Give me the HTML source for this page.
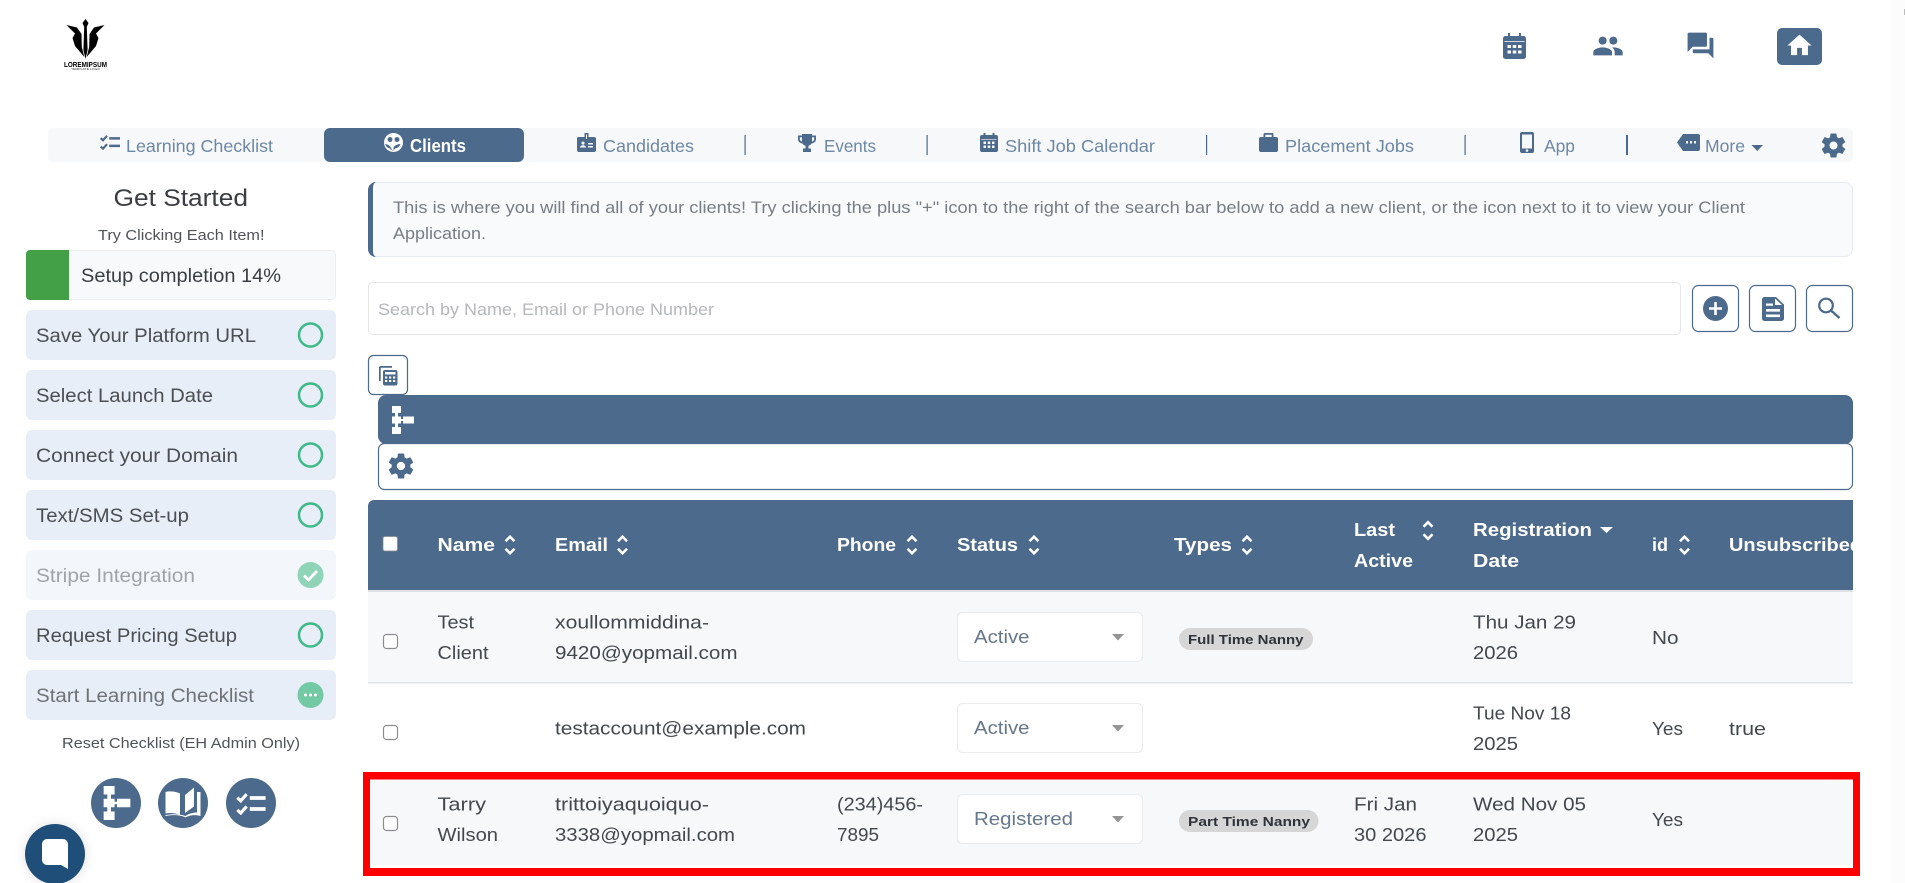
<!DOCTYPE html>
<html lang="en"><head><meta charset="utf-8"><title>Clients</title>
<style>
html,body{margin:0;padding:0;background:#fff;width:1905px;height:883px;overflow:hidden}
svg{display:block}
text{font-family:"Liberation Sans",sans-serif;font-size:18px;fill:#43484d}
.tab{font-size:17.5px;fill:#6d87a5}
.th{font-weight:700;fill:#fff;font-size:18px}
.side{font-size:19px;fill:#4b4f53}
.sel{fill:#66778b;font-size:18px}
.bd{font-weight:700;font-size:13px;fill:#2f3338}
.i{fill:#4c6a8c}
</style></head>
<body>
<svg xmlns="http://www.w3.org/2000/svg" width="1905" height="883" viewBox="0 0 1905 883">
<defs>
<symbol id="gear" viewBox="2.6 2 18.8 20"><path fill-rule="evenodd" d="M19.14 12.94c.04-.3.06-.61.06-.94 0-.32-.02-.64-.07-.94l2.03-1.58c.18-.14.23-.41.12-.61l-1.92-3.32c-.12-.22-.37-.29-.59-.22l-2.39.96c-.5-.38-1.03-.7-1.62-.94l-.36-2.54c-.04-.24-.24-.41-.48-.41h-3.84c-.24 0-.43.17-.47.41l-.36 2.54c-.59.24-1.13.57-1.62.94l-2.39-.96c-.22-.08-.47 0-.59.22L2.74 8.87c-.12.21-.08.47.12.61l2.03 1.58c-.05.3-.09.63-.09.94s.02.64.07.94l-2.03 1.58c-.18.14-.23.41-.12.61l1.92 3.32c.12.22.37.29.59.22l2.39-.96c.5.38 1.03.7 1.62.94l.36 2.54c.05.24.24.41.48.41h3.84c.24 0 .44-.17.47-.41l.36-2.54c.59-.24 1.13-.56 1.62-.94l2.39.96c.22.08.47 0 .59-.22l1.92-3.32c.12-.22.07-.47-.12-.61l-2.01-1.58zM12 15.2a3.2 3.2 0 1 1 0-6.4 3.2 3.2 0 0 1 0 6.4z"/></symbol>
<symbol id="sort" viewBox="0 0 12 22"><path fill="none" stroke="#fff" stroke-width="2.5" d="M1.5 7.2 6 2.7l4.5 4.5M1.5 14.8 6 19.3l4.5-4.5"/></symbol>
<symbol id="cal" viewBox="0 0 23 26"><path fill-rule="evenodd" d="M5 0h2v3h9V0h2v3h2.500A2.500 2.500 0 0 1 23 5.500v18a2.500 2.500 0 0 1-2.500 2.500h-18A2.500 2.500 0 0 1 0 23.500v-18A2.500 2.500 0 0 1 2.500 3H5zM1.500 8v.8h20V8zM4.500 12h3.500v3H4.500zM9.750 12h3.500v3h-3.500zM15 12h3.500v3H15zM4.500 17.500h3.500v3H4.500zM9.750 17.500h3.500v3h-3.500zM15 17.500h3.500v3H15z"/></symbol>
<symbol id="cal2" viewBox="0 0 18 19"><path fill-rule="evenodd" d="M3.500 0h2v2h7V0h2v2H16a2 2 0 0 1 2 2v13a2 2 0 0 1-2 2H2a2 2 0 0 1-2-2V4a2 2 0 0 1 2-2h1.500zM1.200 6v.6h15.600V6zM3.500 8.500H6V11H3.500zM7.750 8.500h2.500V11h-2.500zM12 8.500h2.500V11H12zM3.500 12.500H6V15H3.500zM7.750 12.500h2.500V15h-2.500zM12 12.500h2.500V15H12z"/></symbol>
<symbol id="sitemap" viewBox="0 0 22 28"><path d="M0 0h9v7H0zM0 10.500h9v7H0zM0 21h9v7H0zM11 10.500h11v7H11zM3 7h3v3.500H3zM3 17.500h3V21H3zM9 13h2v2H9z"/></symbol>
<symbol id="checks" viewBox="0 0 24 18"><path fill="none" stroke="currentColor" stroke-width="2.600" d="M.8 3.800 3.600 6.400 8.400 1M.8 13.800l2.800 2.600 4.800-5.400"/><path fill="currentColor" d="M11 2.600h13v3H11zM11 11.600h13v3H11z"/></symbol>
<clipPath id="tc"><path d="M368 500h1485v90H368z"/></clipPath>
</defs>

<rect x="1890" y="0" width="15" height="883" fill="#fcfcfc"/>
<rect x="1904" y="9" width="1" height="6" fill="#bbb"/>

<!-- logo -->
<g fill="#000">
<path d="M85.500 19 88.500 23 86.800 27 87.600 50 85.500 59 83.400 50 84.200 27 82.500 23z"/>
<path d="M66.500 25 77 27.500 81.500 34 81.800 47 84.300 57 75 46 72.500 38 75 33.500z"/>
<path d="M104.500 25 94 27.500 89.500 34 89.200 47 86.700 57 96 46 98.500 38 96 33.500z"/>
</g>
<text x="64" y="67" textLength="43" lengthAdjust="spacingAndGlyphs" style="font-size:7.5px;font-weight:700;fill:#000">LOREMIPSUM</text>
<text x="71" y="70" textLength="29" lengthAdjust="spacingAndGlyphs" style="font-size:2.500px;fill:#333">TEMPLATE LOGO</text>

<!-- header icons -->
<use href="#cal" x="1503" y="33" width="23" height="26" class="i"/>
<svg x="1592" y="30" width="32" height="32" viewBox="0 0 24 24" class="i"><path d="M16 11c1.660 0 2.990-1.340 2.990-3S17.660 5 16 5c-1.660 0-3 1.340-3 3s1.340 3 3 3zm-8 0c1.660 0 2.990-1.340 2.990-3S9.660 5 8 5C6.340 5 5 6.340 5 8s1.340 3 3 3zm0 2c-2.330 0-7 1.170-7 3.500V19h14v-2.500c0-2.330-4.670-3.500-7-3.500zm8 0c-.29 0-.62.02-.97.05 1.160.84 1.970 1.970 1.970 3.450V19h6v-2.500c0-2.330-4.670-3.500-7-3.500z"/></svg>
<svg x="1685" y="30" width="31" height="31" viewBox="0 0 24 24" class="i"><path d="M21 6h-2v9H6v2c0 .55.45 1 1 1h11l4 4V7c0-.55-.45-1-1-1zm-4 6V3c0-.55-.45-1-1-1H3c-.55 0-1 .45-1 1v14l4-4h10c.55 0 1-.45 1-1z"/></svg>
<rect x="1777" y="28" width="45" height="37" rx="5" fill="#4c6a8c"/>
<svg x="1785" y="31" width="29" height="29" viewBox="0 0 24 24" fill="#fff"><path d="M10 20v-6h4v6h5v-8h3L12 3 2 12h3v8z"/></svg>

<!-- tabs -->
<rect x="48" y="128" width="1805" height="34" rx="5" fill="#f6f8fa"/>
<rect x="324" y="128" width="200" height="34" rx="6" fill="#4c6a8c"/>
<svg x="100" y="135" width="20" height="15" viewBox="0 0 24 18" color="#4c6a8c"><use href="#checks" width="24" height="18"/></svg>
<text class="tab" x="126" y="152" textLength="147" lengthAdjust="spacingAndGlyphs">Learning Checklist</text>
<circle cx="393.500" cy="142.500" r="9.500" fill="#fff"/>
<circle cx="390" cy="139.500" r="2.500" fill="#4c6a8c"/><circle cx="397" cy="139.500" r="2.500" fill="#4c6a8c"/><path d="M385 144c3 .5 6 1.500 7 6.500h1.500v-3c1-2 4-3.500 7-3.500-1 3-3 4-5.500 4.500l-1 1.500h-3l-1-1.500c-2.500-.5-4-2-5-4.500z" fill="#4c6a8c"/>
<text x="410" y="152" textLength="56" lengthAdjust="spacingAndGlyphs" style="font-weight:700;fill:#fff;font-size:18px">Clients</text>
<svg x="577" y="133" width="19" height="19" viewBox="0 0 19 19"><path class="i" fill-rule="evenodd" d="M7.500 0h4v4H17a2 2 0 0 1 2 2v11a2 2 0 0 1-2 2H2a2 2 0 0 1-2-2V6a2 2 0 0 1 2-2h5.500zM9 1.500V6h1V1.500zM6 8.500a1.600 1.600 0 1 0 .01 0zM3 14.500h6c0-3-6-3-6 0zM11 10h5v1.500h-5zM11 13h5v1.500h-5z"/></svg>
<text class="tab" x="603" y="152" textLength="91" lengthAdjust="spacingAndGlyphs">Candidates</text>
<rect x="744.500" y="135" width="1.200" height="20" fill="#4c6a8c"/>
<svg x="798" y="134" width="18" height="18" viewBox="0 0 18 18"><path class="i" fill-rule="evenodd" d="M4 0h10v1.500h4V5c0 2.500-2 4.200-4.500 4.500C12.800 10.800 11.500 11.500 10.500 11.800V14.500H13V18H5V14.500h2.500V11.800C6.500 11.500 5.200 10.800 4.500 9.500 2 9.200 0 7.500 0 5V1.500h4zM1.800 3.200V5c0 1.200.9 2.200 2.200 2.600V3.200zM16.200 3.200H14v4.400c1.300-.4 2.200-1.400 2.200-2.600z"/></svg>
<text class="tab" x="824" y="152" textLength="52" lengthAdjust="spacingAndGlyphs">Events</text>
<rect x="926.500" y="135" width="1.200" height="20" fill="#4c6a8c"/>
<use href="#cal2" x="980" y="133" width="18" height="19" class="i"/>
<text class="tab" x="1005" y="152" textLength="150" lengthAdjust="spacingAndGlyphs">Shift Job Calendar</text>
<rect x="1206" y="135" width="1.200" height="20" fill="#4c6a8c"/>
<svg x="1259" y="133" width="19" height="19" viewBox="0 0 19 19"><path class="i" fill-rule="evenodd" d="M6 0h7a1.500 1.500 0 0 1 1.500 1.500V4H17a2 2 0 0 1 2 2v11a2 2 0 0 1-2 2H2a2 2 0 0 1-2-2V6a2 2 0 0 1 2-2h2.500V1.500A1.500 1.500 0 0 1 6 0zM6.300 1.800V4h6.400V1.800z"/></svg>
<text class="tab" x="1285" y="152" textLength="129" lengthAdjust="spacingAndGlyphs">Placement Jobs</text>
<rect x="1464.500" y="135" width="1.200" height="20" fill="#4c6a8c"/>
<svg x="1520" y="132" width="14" height="21" viewBox="0 0 14 21"><path class="i" fill-rule="evenodd" d="M2 0h10a2 2 0 0 1 2 2v17a2 2 0 0 1-2 2H2a2 2 0 0 1-2-2V2a2 2 0 0 1 2-2zM2 2.500v14h10v-14zM7 17.300a1.300 1.300 0 1 0 .01 0z"/></svg>
<text class="tab" x="1544" y="152" textLength="31" lengthAdjust="spacingAndGlyphs">App</text>
<rect x="1626" y="135" width="2" height="20" fill="#4c6a8c"/>
<svg x="1677" y="134" width="23" height="17" viewBox="0 0 23 17"><path class="i" fill-rule="evenodd" d="M6 0h15a2 2 0 0 1 2 2v13a2 2 0 0 1-2 2H6L0 8.500zM9 7v2.500h2V7zM13 7v2.500h2V7zM17 7v2.500h2V7z"/></svg>
<text class="tab" x="1705" y="152" textLength="40" lengthAdjust="spacingAndGlyphs">More</text>
<path class="i" d="M1751.500 145h11.500l-5.750 6z"/>
<use href="#gear" x="1821" y="133" width="25" height="25" class="i"/>

<!-- sidebar -->
<text x="113.500" y="206" textLength="134.500" lengthAdjust="spacingAndGlyphs" style="font-size:24px;fill:#3a3e42">Get Started</text>
<text x="98" y="240" textLength="166.500" lengthAdjust="spacingAndGlyphs" style="font-size:15px;fill:#505458">Try Clicking Each Item!</text>
<rect x="26.500" y="250.500" width="309" height="49" rx="4" fill="#f8f9fb" stroke="#eceef1"/>
<path d="M30 250h39v50H30a4 4 0 0 1-4-4v-42a4 4 0 0 1 4-4z" fill="#43a047"/>
<text x="81" y="282" textLength="200" lengthAdjust="spacingAndGlyphs" style="font-size:19px;fill:#3a3e42">Setup completion 14%</text>

<g fill="#e8eef8">
<rect x="26" y="310" width="310" height="50" rx="6"/>
<rect x="26" y="370" width="310" height="50" rx="6"/>
<rect x="26" y="430" width="310" height="50" rx="6"/>
<rect x="26" y="490" width="310" height="50" rx="6"/>
<rect x="26" y="550" width="310" height="50" rx="6" fill="#f3f6fb"/>
<rect x="26" y="610" width="310" height="50" rx="6"/>
<rect x="26" y="670" width="310" height="50" rx="6"/>
</g>
<text class="side" x="36" y="342" textLength="220" lengthAdjust="spacingAndGlyphs">Save Your Platform URL</text>
<text class="side" x="36" y="402" textLength="177" lengthAdjust="spacingAndGlyphs">Select Launch Date</text>
<text class="side" x="36" y="462" textLength="202" lengthAdjust="spacingAndGlyphs">Connect your Domain</text>
<text class="side" x="36" y="522" textLength="153" lengthAdjust="spacingAndGlyphs">Text/SMS Set-up</text>
<text class="side" x="36" y="582" textLength="159" lengthAdjust="spacingAndGlyphs" style="fill:#a0a3a7">Stripe Integration</text>
<text class="side" x="36" y="642" textLength="201" lengthAdjust="spacingAndGlyphs">Request Pricing Setup</text>
<text class="side" x="36" y="702" textLength="218" lengthAdjust="spacingAndGlyphs" style="fill:#6f7377">Start Learning Checklist</text>
<g fill="none" stroke="#3dba87" stroke-width="2.500">
<circle cx="310.500" cy="335" r="11.500"/><circle cx="310.500" cy="395" r="11.500"/><circle cx="310.500" cy="455" r="11.500"/><circle cx="310.500" cy="515" r="11.500"/><circle cx="310.500" cy="635" r="11.500"/>
</g>
<circle cx="310.500" cy="575" r="13" fill="#8fd4b6"/>
<path d="M304 575.500l4.500 4.500 8.500-9" fill="none" stroke="#fff" stroke-width="2.800"/>
<circle cx="310.500" cy="695" r="13" fill="#72c9a4"/>
<g fill="#fff"><circle cx="305.500" cy="695" r="1.500"/><circle cx="310.500" cy="695" r="1.500"/><circle cx="315.500" cy="695" r="1.500"/></g>
<text x="62" y="748" textLength="238" lengthAdjust="spacingAndGlyphs" style="font-size:15px;fill:#505458">Reset Checklist (EH Admin Only)</text>
<circle cx="116" cy="803" r="25" fill="#4c6a8c"/>
<circle cx="183" cy="803" r="25" fill="#4c6a8c"/>
<circle cx="251" cy="803" r="25" fill="#4c6a8c"/>
<use href="#sitemap" x="103" y="786" width="28" height="34" fill="#fff"/>
<path fill="#fff" d="M165.500 792c4-1.200 10-.8 14.500 1.500v21.500c-4-1.800-10-2.500-14.500-1.500zM185 795l9-7.500v19l-9 6.500zM197 792h3.500v24c-5.500-1.500-11-1-15 1.500-4.500-2.500-12-3-20-1.500v-1c7-1.300 15-1 20 1 3.500-2.500 7.500-3.500 11.500-3.500z"/>
<svg x="236" y="793" width="30" height="22" viewBox="0 0 24 18" color="#fff"><use href="#checks" width="24" height="18"/></svg>
<defs><filter id="sh" x="-30%" y="-30%" width="160%" height="160%"><feGaussianBlur stdDeviation="6"/></filter></defs>
<circle cx="55" cy="854" r="30" fill="#000" opacity=".12" filter="url(#sh)"/>
<circle cx="55" cy="854" r="30" fill="#1f4e79"/>
<path fill="#fff" d="M47 839h16a5 5 0 0 1 5 5v25l-7-4H47a5 5 0 0 1-5-5v-16a5 5 0 0 1 5-5z"/>

<!-- alert -->
<rect x="368.500" y="182.500" width="1484" height="74" rx="8" fill="#f9fafc" stroke="#e8ebef"/>
<path d="M376 182a8 8 0 0 0-8 8v59a8 8 0 0 0 8 8c-2-1-3-3-3-6v-63c0-3 1-5 3-6z" fill="#4c6a8c"/>
<text x="393" y="213" textLength="1352" lengthAdjust="spacingAndGlyphs" style="font-size:16.500px;fill:#777d84">This is where you will find all of your clients! Try clicking the plus "+" icon to the right of the search bar below to add a new client, or the icon next to it to view your Client</text>
<text x="393" y="239" textLength="93" lengthAdjust="spacingAndGlyphs" style="font-size:16.500px;fill:#777d84">Application.</text>

<!-- search -->
<rect x="368.500" y="282.500" width="1312" height="52" rx="4" fill="#fff" stroke="#e6e7e9"/>
<text x="378" y="315" textLength="336" lengthAdjust="spacingAndGlyphs" style="font-size:17px;fill:#b5b7ba">Search by Name, Email or Phone Number</text>
<g fill="#fff" stroke="#4c6a8c" stroke-width="1.200">
<rect x="1692.500" y="285.500" width="46" height="46" rx="6"/>
<rect x="1749.500" y="285.500" width="46" height="46" rx="6"/>
<rect x="1806.500" y="285.500" width="46" height="46" rx="6"/>
</g>
<circle cx="1715.500" cy="308.500" r="12.500" fill="#4c6a8c"/>
<path d="M1709 307.200h5.200v-5.200h2.600v5.200h5.200v2.600h-5.200v5.200h-2.600v-5.200h-5.200z" fill="#fff"/>
<path class="i" fill-rule="evenodd" d="M1764.500 297h11.500l8 7.500v14a2.500 2.500 0 0 1-2.500 2.500h-17a2.500 2.500 0 0 1-2.500-2.500v-19a2.500 2.500 0 0 1 2.500-2.500zM1775 298.500v6.500h7zM1766 303.500v2.300h7v-2.300zM1766 309v2.600h14V309zM1766 314.500v2.600h14v-2.600z"/>
<circle cx="1826" cy="305.500" r="6.800" fill="none" stroke="#4c6a8c" stroke-width="2.200"/>
<path d="M1831 310.500l8.500 7.500" stroke="#4c6a8c" stroke-width="2.400" fill="none"/>

<!-- small button + bars -->
<rect x="368.500" y="355.500" width="39" height="39" rx="5" fill="#fff" stroke="#4c6a8c" stroke-width="1.200"/>
<path d="M379 372v-4a2 2 0 0 1 2-2h11v1.700H381.500a.8.8 0 0 0-.8.8V381H379z" class="i"/>
<rect x="383" y="370" width="14.500" height="15.500" rx="2" class="i"/>
<g fill="#fff"><rect x="385" y="372" width="10.500" height="2.500"/><rect x="385" y="376.500" width="2.200" height="2"/><rect x="389" y="376.500" width="2.200" height="2"/><rect x="393" y="376.500" width="2.200" height="2"/><rect x="385" y="380" width="2.200" height="2"/><rect x="389" y="380" width="2.200" height="2"/><rect x="393" y="380" width="2.200" height="2"/></g>
<rect x="378.500" y="443.500" width="1474" height="46" rx="6" fill="#fff" stroke="#4c6a8c" stroke-width="1.200"/>
<rect x="378" y="395" width="1475" height="49" rx="8" fill="#4c6a8c"/>
<use href="#sitemap" x="392" y="406" width="22" height="28" fill="#fff"/>
<use href="#gear" x="388" y="453" width="26" height="26" class="i"/>

<!-- table -->
<path d="M374 500h1479v90H368v-84a6 6 0 0 1 6-6z" fill="#4c6a8c"/>
<rect x="368" y="590" width="1485" height="2" fill="#dee2e6"/>
<rect x="368" y="592" width="1485" height="90" fill="#f7f8fa"/>
<rect x="368" y="682" width="1485" height="1.500" fill="#dee2e6"/>
<rect x="370" y="779" width="1483" height="86" fill="#f7f8fa"/>

<rect x="383" y="536.500" width="14.500" height="14.500" rx="2" fill="#fff" stroke="#8a8a8a" stroke-width=".8"/>
<text class="th" x="437.500" y="551" textLength="57.500" lengthAdjust="spacingAndGlyphs">Name</text>
<use href="#sort" x="504" y="534" width="12" height="22"/>
<text class="th" x="555" y="551" textLength="53" lengthAdjust="spacingAndGlyphs">Email</text>
<use href="#sort" x="616.500" y="534" width="12" height="22"/>
<text class="th" x="837" y="551" textLength="59" lengthAdjust="spacingAndGlyphs">Phone</text>
<use href="#sort" x="906" y="534" width="12" height="22"/>
<text class="th" x="957" y="551" textLength="61" lengthAdjust="spacingAndGlyphs">Status</text>
<use href="#sort" x="1028" y="534" width="12" height="22"/>
<text class="th" x="1174" y="551" textLength="58" lengthAdjust="spacingAndGlyphs">Types</text>
<use href="#sort" x="1241" y="534" width="12" height="22"/>
<text class="th" x="1354" y="536" textLength="41" lengthAdjust="spacingAndGlyphs">Last</text>
<text class="th" x="1354" y="567" textLength="59" lengthAdjust="spacingAndGlyphs">Active</text>
<use href="#sort" x="1422" y="519" width="12" height="23"/>
<text class="th" x="1473" y="536" textLength="119" lengthAdjust="spacingAndGlyphs">Registration</text>
<text class="th" x="1473" y="567" textLength="46" lengthAdjust="spacingAndGlyphs">Date</text>
<path d="M1600 527h13l-6.500 6z" fill="#fff"/>
<text class="th" x="1652" y="551" textLength="16" lengthAdjust="spacingAndGlyphs">id</text>
<use href="#sort" x="1678.500" y="534" width="12" height="22"/>
<g clip-path="url(#tc)"><text class="th" x="1729" y="551" textLength="133" lengthAdjust="spacingAndGlyphs">Unsubscribed</text></g>

<g fill="#fff" stroke="#8d8d8d" stroke-width="1.200">
<rect x="383.500" y="634.500" width="14" height="14" rx="3"/>
<rect x="383.500" y="725.500" width="14" height="14" rx="3"/>
<rect x="383.500" y="816.500" width="14" height="14" rx="3"/>
</g>

<text x="437.500" y="628.500" textLength="36.500" lengthAdjust="spacingAndGlyphs">Test</text>
<text x="437.500" y="659" textLength="51" lengthAdjust="spacingAndGlyphs">Client</text>
<text x="555" y="628.500" textLength="154" lengthAdjust="spacingAndGlyphs">xoullommiddina-</text>
<text x="555" y="659" textLength="182.500" lengthAdjust="spacingAndGlyphs">9420@yopmail.com</text>
<text x="555" y="734.500" textLength="251" lengthAdjust="spacingAndGlyphs">testaccount@example.com</text>
<text x="437.500" y="810.500" textLength="48.500" lengthAdjust="spacingAndGlyphs">Tarry</text>
<text x="437.500" y="841" textLength="60.500" lengthAdjust="spacingAndGlyphs">Wilson</text>
<text x="555" y="810.500" textLength="154" lengthAdjust="spacingAndGlyphs">trittoiyaquoiquo-</text>
<text x="555" y="841" textLength="180" lengthAdjust="spacingAndGlyphs">3338@yopmail.com</text>
<text x="837" y="810.500" textLength="86" lengthAdjust="spacingAndGlyphs">(234)456-</text>
<text x="837" y="841" textLength="42" lengthAdjust="spacingAndGlyphs">7895</text>

<g fill="#fff" stroke="#e9ebee">
<rect x="957.500" y="612.500" width="185" height="49" rx="5"/>
<rect x="957.500" y="703.500" width="185" height="49" rx="5"/>
<rect x="957.500" y="794.500" width="185" height="49" rx="5"/>
</g>
<text class="sel" x="974" y="643" textLength="55.500" lengthAdjust="spacingAndGlyphs">Active</text>
<text class="sel" x="974" y="734" textLength="55.500" lengthAdjust="spacingAndGlyphs">Active</text>
<text class="sel" x="974" y="825" textLength="99" lengthAdjust="spacingAndGlyphs">Registered</text>
<g fill="#959595">
<path d="M1112 634h12l-6 6.500z"/><path d="M1112 725h12l-6 6.500z"/><path d="M1112 816h12l-6 6.500z"/>
</g>

<rect x="1179" y="628" width="134" height="22" rx="11" fill="#d6d6d6"/>
<text class="bd" x="1188" y="644" textLength="115.500" lengthAdjust="spacingAndGlyphs">Full Time Nanny</text>
<rect x="1179" y="810" width="139.500" height="22" rx="11" fill="#d6d6d6"/>
<text class="bd" x="1188" y="826" textLength="122" lengthAdjust="spacingAndGlyphs">Part Time Nanny</text>

<text x="1354" y="810.500" textLength="63" lengthAdjust="spacingAndGlyphs">Fri Jan</text>
<text x="1354" y="841" textLength="72.500" lengthAdjust="spacingAndGlyphs">30 2026</text>
<text x="1473" y="628.500" textLength="103" lengthAdjust="spacingAndGlyphs">Thu Jan 29</text>
<text x="1473" y="659" textLength="45" lengthAdjust="spacingAndGlyphs">2026</text>
<text x="1473" y="719.500" textLength="98" lengthAdjust="spacingAndGlyphs">Tue Nov 18</text>
<text x="1473" y="750" textLength="45" lengthAdjust="spacingAndGlyphs">2025</text>
<text x="1473" y="810.500" textLength="113" lengthAdjust="spacingAndGlyphs">Wed Nov 05</text>
<text x="1473" y="841" textLength="45" lengthAdjust="spacingAndGlyphs">2025</text>
<text x="1652" y="644" textLength="26.500" lengthAdjust="spacingAndGlyphs">No</text>
<text x="1652" y="735" textLength="31" lengthAdjust="spacingAndGlyphs">Yes</text>
<text x="1652" y="826" textLength="31" lengthAdjust="spacingAndGlyphs">Yes</text>
<text x="1729" y="735" textLength="37" lengthAdjust="spacingAndGlyphs">true</text>

<!-- red highlight -->
<path fill="#f00" fill-rule="evenodd" d="M363 772H1860V876H363zM370 779.500V868H1853V779.500z"/>
</svg>
</body></html>
